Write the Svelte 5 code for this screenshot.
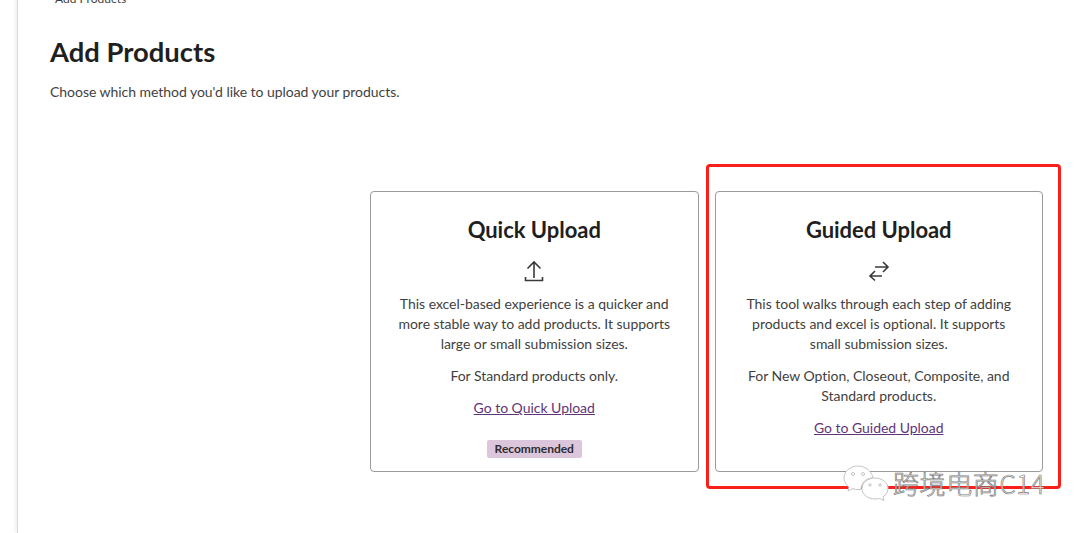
<script>
	const methods = [
		{
			title: 'Quick Upload',
			icon: 'upload',
			text: 'This excel-based experience is a quicker and more stable way to add products. It supports large or small submission sizes.',
			note: 'For Standard products only.',
			link: 'Go to Quick Upload',
			badge: 'Recommended'
		},
		{
			title: 'Guided Upload',
			icon: 'swap',
			text: 'This tool walks through each step of adding products and excel is optional. It supports small submission sizes.',
			note: 'For New Option, Closeout, Composite, and Standard products.',
			link: 'Go to Guided Upload'
		}
	];
</script>

<div class="shell">
	<main class="page">
		<div class="crumb">Add Products</div>
		<h1>Add Products</h1>
		<p class="intro">Choose which method you'd like to upload your products.</p>

		<div class="cards">
			{#each methods as m}
				<section class="card">
					<h2>{m.title}</h2>
					<svg class="icon" width="24" height="24" viewBox="0 0 24 24" fill="none" stroke="#3a3a3c" stroke-width="1.6">
						{#if m.icon === 'upload'}
							<path d="M12 18V2M5.500 8.500 12 2l6.500 6.500M3.500 17v3.500h17V17" />
						{:else}
							<path d="M8 7h13M16 2l5 5-5 5" />
							<path d="M15 16H3M8 11l-5 5 5 4.500" />
						{/if}
					</svg>
					<p>{m.text}</p>
					<p>{m.note}</p>
					<a href="#top">{m.link}</a>
					{#if m.badge}
						<span class="badge">{m.badge}</span>
					{/if}
				</section>
			{/each}
		</div>
	</main>

	<div class="callout"></div>

	<div class="mark">
		<svg width="48" height="36" viewBox="0 0 48 36" fill="#fff" stroke="#c4c4c4" stroke-width="1">
			<path d="M15 1C7 1 1 6.500 1 13c0 3.800 2 7 5 9.200L5 26l4.600-2.300c1.700.5 3.500.8 5.400.8h3C18 17 24 12.500 30 13 29 6.500 22.500 1 15 1Z" />
			<path d="M32 13c-7 0-13 4.500-13 10.500S25 34 32 34c1.500 0 3-.2 4.300-.6L41 35.500l-1-3.700c3-2 5-4.800 5-8.300C45 17.500 39 13 32 13Z" />
			<circle cx="10" cy="9" r="1.500" />
			<circle cx="20" cy="9" r="1.500" />
			<circle cx="27" cy="20" r="1.200" />
			<circle cx="37" cy="20" r="1.200" />
		</svg>
		<span>跨境电商C14</span>
	</div>
</div>

<style>
	:global(body) {
		margin: 0;
		background: #fff;
		overflow: hidden;
	}

	.shell {
		position: relative;
		height: 533px;
		overflow: hidden;
		font-family: Lato, sans-serif;
		color: #3f3f41;
	}

	.page {
		box-sizing: border-box;
		display: flow-root;
		height: 533px;
		margin-left: 17px;
		padding: 0 37px 0 32px;
		border-left: 1px solid #d9d9d9;
		box-shadow: -2px 0 3px rgba(0, 0, 0, 0.06);
	}

	.crumb {
		margin-top: -8px;
		margin-left: 5px;
		font-size: 12px;
		line-height: 14px;
	}

	h1 {
		margin: 29px 0 0;
		font-size: 27.400px;
		line-height: 34px;
		font-weight: 700;
		color: #1f1f21;
	}

	.intro {
		margin: 13px 0 0;
		font-size: 14px;
		line-height: 20px;
		letter-spacing: -0.04px;
	}

	.cards {
		display: flex;
		justify-content: flex-end;
		align-items: stretch;
		gap: 16px;
		margin-top: 89px;
	}

	.card {
		box-sizing: border-box;
		display: flex;
		flex-direction: column;
		align-items: center;
		width: 328.500px;
		height: 281px;
		padding: 24px 24px 0;
		border: 1px solid #9a9a9c;
		border-radius: 4px;
		text-align: center;
		font-size: 14px;
		line-height: 20px;
		letter-spacing: -0.03px;
	}

	h2 {
		margin: 0;
		font-size: 22px;
		line-height: 28px;
		font-weight: 700;
		color: #1f1f21;
	}

	.icon {
		display: block;
		margin-top: 16px;
	}

	.card p {
		margin: 0 0 12px;
	}

	.icon + p {
		margin-top: 10px;
	}

	a {
		color: #5f3478;
		text-decoration: underline;
	}

	.badge {
		margin-top: 22px;
		padding: 0 8px;
		background: #dcc6dc;
		border-radius: 2px;
		font-size: 12px;
		line-height: 18px;
		font-weight: 700;
		color: #2d2d2f;
	}

	.callout {
		position: absolute;
		left: 706px;
		top: 164px;
		width: 355px;
		height: 325px;
		box-sizing: border-box;
		border: 3px solid #fb1f1a;
		border-radius: 4px;
		pointer-events: none;
	}

	.mark {
		position: absolute;
		left: 843px;
		top: 465px;
		display: flex;
		align-items: center;
		gap: 2px;
	}

	.mark span {
		font-family: 'Noto Sans CJK SC', sans-serif;
		font-size: 26px;
		line-height: 36px;
		font-weight: 300;
		letter-spacing: 0.6px;
		color: rgba(255, 255, 255, 0.85);
		-webkit-text-stroke: 0.7px #7c7c7c;
	}
</style>
